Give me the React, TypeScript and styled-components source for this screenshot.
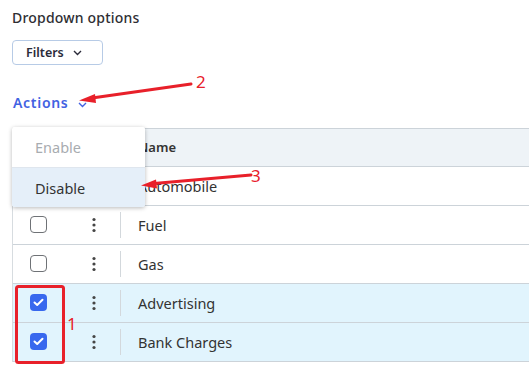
import React from "react";
import styled, { createGlobalStyle } from "styled-components";

const GlobalStyle = createGlobalStyle`
  html, body {
    margin: 0;
    padding: 0;
    background: #ffffff;
    overflow: hidden;
  }
  body {
    font-family: "Noto Sans", "Open Sans", sans-serif;
    color: #333333;
  }
`;

const Page = styled.div`
  position: relative;
  width: 529px;
  height: 368px;
  padding: 8px 0 0 12px;
  box-sizing: border-box;
  overflow: hidden;
`;

const Title = styled.h1`
  margin: 0;
  font-size: 14px;
  line-height: 20px;
  font-weight: 500;
  color: #2e2e33;
  letter-spacing: 0.2px;
`;

const FilterButton = styled.button`
  display: flex;
  align-items: center;
  gap: 9px;
  margin-top: 12px;
  width: 91px;
  height: 25px;
  padding: 0 0 0 13px;
  box-sizing: border-box;
  border: 1px solid #b7cbe6;
  border-radius: 4px;
  background: #ffffff;
  font-family: inherit;
  font-size: 12.5px;
  font-weight: 600;
  color: #2b2b3a;
`;

const ActionsLink = styled.div`
  display: flex;
  align-items: center;
  gap: 10px;
  margin-top: 27px;
  margin-left: 1px;
  height: 20px;
  font-size: 14px;
  font-weight: 600;
  letter-spacing: 0.7px;
  color: #4262e2;
`;

const Chevron = styled.svg<{ $color: string }>`
  width: 9px;
  height: 6px;
  stroke: ${(p) => p.$color};
  margin-top: ${(p) => (p.$color === "#4262e2" ? "5px" : "1px")};
`;

const TableWrap = styled.div`
  position: relative;
  margin-top: 16px;
  width: 560px;
`;

const Table = styled.div`
  border-left: 1px solid #d7dce0;
`;

const Row = styled.div<{ $head?: boolean; $selected?: boolean }>`
  display: grid;
  grid-template-columns: 51px 56px 1fr;
  align-items: center;
  height: ${(p) => (p.$head ? "37px" : "38px")};
  border-top: ${(p) => (p.$head ? "1px solid #ccd3d9" : "none")};
  border-bottom: 1px solid #ccd3d9;
  background: ${(p) =>
    p.$head ? "#eef3f7" : p.$selected ? "#e1f4fd" : "#ffffff"};
`;

const CheckCell = styled.div`
  display: flex;
  justify-content: center;
  margin-top: -1px;
`;

const KebabCell = styled.div`
  display: flex;
  justify-content: center;
  padding-left: 3px;
  margin-top: -1px;
`;

const NameCell = styled.div<{ $head?: boolean }>`
  position: relative;
  height: 100%;
  display: flex;
  align-items: center;
  padding-left: 18px;
  margin-top: -1px;
  font-size: ${(p) => (p.$head ? "13px" : "14.5px")};
  font-weight: ${(p) => (p.$head ? 600 : 400)};
  color: #333333;
  &::before {
    content: "";
    position: absolute;
    left: 0;
    top: 6px;
    bottom: 6px;
    border-left: 1px solid #d3d8dc;
  }
`;

const Box = styled.span<{ $checked?: boolean }>`
  width: 17px;
  height: 17px;
  box-sizing: border-box;
  border-radius: 4px;
  border: ${(p) => (p.$checked ? "none" : "1px solid #6f7276")};
  background: ${(p) => (p.$checked ? "#3868ee" : "#ffffff")};
  display: flex;
  align-items: center;
  justify-content: center;
`;

const Menu = styled.div`
  position: absolute;
  left: 0;
  top: -1px;
  width: 133px;
  background: #ffffff;
  border-radius: 3px;
  box-shadow: 0 1px 4px rgba(0, 0, 0, 0.28);
  overflow: hidden;
`;

const MenuItem = styled.div<{ $disabled?: boolean; $active?: boolean }>`
  height: 40px;
  display: flex;
  align-items: center;
  padding-left: 23px;
  font-size: 14.5px;
  color: ${(p) => (p.$disabled ? "#a8acb0" : "#333333")};
  background: ${(p) => (p.$active ? "#e5eff9" : "#ffffff")};
  border-top: ${(p) => (p.$active ? "1px solid #dfe6ee" : "none")};
  box-sizing: border-box;
`;

const Annotations = styled.svg`
  position: absolute;
  left: 0;
  top: 0;
  width: 529px;
  height: 368px;
  pointer-events: none;
`;

const ChevronIcon = ({ color }: { color: string }) => (
  <Chevron $color={color} viewBox="0 0 9 6" fill="none" strokeWidth={1.4}>
    <polyline points="1,1 4.5,4.5 8,1" />
  </Chevron>
);

const Kebab = () => (
  <svg width="4" height="16" viewBox="0 0 4 16">
    <circle cx="2" cy="2.5" r="1.6" fill="#454545" />
    <circle cx="2" cy="8" r="1.6" fill="#454545" />
    <circle cx="2" cy="13.5" r="1.6" fill="#454545" />
  </svg>
);

const rows = [
  { name: "Automobile", checked: false },
  { name: "Fuel", checked: false },
  { name: "Gas", checked: false },
  { name: "Advertising", checked: true },
  { name: "Bank Charges", checked: true },
];

const App: React.FC = () => {
  return (
    <Page>
      <GlobalStyle />
      <Title>Dropdown options</Title>
      <FilterButton>
        Filters
        <ChevronIcon color="#2b2b3a" />
      </FilterButton>
      <ActionsLink>
        Actions
        <ChevronIcon color="#4262e2" />
      </ActionsLink>

      <TableWrap>
        <Table>
          <Row $head>
            <CheckCell />
            <KebabCell />
            <NameCell $head>Name</NameCell>
          </Row>
          {rows.map((r) => (
            <Row key={r.name} $selected={r.checked}>
              <CheckCell>
                <Box $checked={r.checked}>
                  {r.checked && (
                    <svg width="11" height="9" viewBox="0 0 11 9" fill="none">
                      <polyline
                        points="1.5,4.5 4.2,7 9.5,1.8"
                        stroke="#ffffff"
                        strokeWidth="2"
                        strokeLinecap="round"
                        strokeLinejoin="round"
                      />
                    </svg>
                  )}
                </Box>
              </CheckCell>
              <KebabCell>
                <Kebab />
              </KebabCell>
              <NameCell>{r.name}</NameCell>
            </Row>
          ))}
        </Table>
        <Menu>
          <MenuItem $disabled>Enable</MenuItem>
          <MenuItem $active>Disable</MenuItem>
        </Menu>
      </TableWrap>

      <Annotations viewBox="0 0 529 368">
        <g stroke="#e8202a" fill="#e8202a" strokeLinecap="round">
          <line x1="191" y1="84" x2="92" y2="98" strokeWidth="3" />
          <polygon points="79,100.5 95,94 96,103" stroke="none" />
          <line x1="251" y1="175" x2="154" y2="183.5" strokeWidth="3" />
          <polygon points="141,185.5 156,179.5 157,188.5" stroke="none" />
          <rect
            x="16.5"
            y="286.5"
            width="47"
            height="76"
            rx="2"
            fill="none"
            strokeWidth="3"
          />
        </g>
        <g
          fill="#e8202a"
          fontFamily="'Noto Sans', sans-serif"
          fontSize="17"
        >
          <text x="196" y="88">2</text>
          <text x="251" y="182">3</text>
          <text x="67" y="330">1</text>
        </g>
      </Annotations>
    </Page>
  );
};

export default App;
